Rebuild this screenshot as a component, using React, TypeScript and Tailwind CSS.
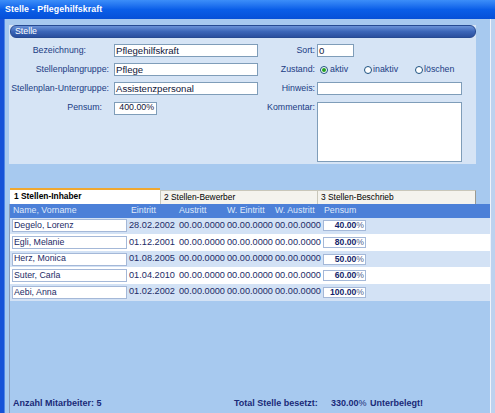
import React from "react";

const rows = [
  { name: "Degelo, Lorenz", eintritt: "28.02.2002", pensum: "40.00" },
  { name: "Egli, Melanie", eintritt: "01.12.2001", pensum: "80.00" },
  { name: "Herz, Monica", eintritt: "01.08.2005", pensum: "50.00" },
  { name: "Suter, Carla", eintritt: "01.04.2010", pensum: "60.00" },
  { name: "Aebi, Anna", eintritt: "01.02.2002", pensum: "100.00" },
];

function Radio({ checked }: { checked?: boolean }) {
  return (
    <span className="w-[8px] h-[8px] rounded-full border border-[#1c5180] bg-white flex items-center justify-center shrink-0">
      {checked && <span className="w-[4px] h-[4px] rounded-full bg-[#21a121]" />}
    </span>
  );
}

function Field({ value, width, right }: { value?: string; width: string; right?: boolean }) {
  return (
    <div
      className={`${width} h-[13px] bg-white border border-[#7f9db9] px-[1px] flex items-center text-[9.6px] text-[#10163a] leading-none ${
        right ? "justify-end" : ""
      }`}
    >
      {value}
    </div>
  );
}

export default function App() {
  return (
    <div className="w-[495px] h-[413px] flex flex-col overflow-hidden font-['Liberation_Sans',Arial,sans-serif]">
      {/* Title bar */}
      <div className="h-[19px] shrink-0 bg-linear-to-b from-[#3c8ef9] via-[#0a5ee8] to-[#0650d8] flex items-center pl-[5px]">
        <span className="text-white font-bold text-[8.8px] tracking-[0.1px]">Stelle - Pflegehilfskraft</span>
      </div>

      <div className="flex flex-1 min-h-0">
        <div className="w-[5px] bg-[#1652d8] border-r border-[#4f86e6]" />

        {/* Main area */}
        <div className="flex-1 bg-[#a7c9ef] flex flex-col min-h-0">
          {/* Stelle panel */}
          <div className="ml-[4px] mt-[6px] w-[467px] bg-[#d6e4f5] flex flex-col">
            <div className="h-[13px] ml-[1px] rounded-[6px] bg-linear-to-b from-[#6b93d8] via-[#3c66b8] to-[#2a4f9e] border border-[#264a92] flex items-center pl-[4px]">
              <span className="text-white text-[8.8px]">Stelle</span>
            </div>

            <div className="flex flex-col gap-[6px] pt-[6px] pb-[2px] text-[8.8px] text-[#203c84]">
              {/* Row 1 */}
              <div className="flex items-center">
                <span className="w-[100px] text-right pr-[23px]">Bezeichnung:</span>
                <div className="ml-[5px]">
                  <Field value="Pflegehilfskraft" width="w-[144px]" />
                </div>
                <span className="w-[57px] text-right">Sort:</span>
                <div className="ml-[2px]">
                  <Field value="0" width="w-[37px]" />
                </div>
              </div>

              {/* Row 2 */}
              <div className="flex items-center">
                <span className="w-[100px] text-right">Stellenplangruppe:</span>
                <div className="ml-[5px]">
                  <Field value="Pflege" width="w-[144px]" />
                </div>
                <span className="w-[57px] text-right">Zustand:</span>
                <div className="ml-[5px] h-[13px] flex items-center">
                  <Radio checked />
                  <span className="ml-[2px]">aktiv</span>
                  <span className="ml-[16px]"><Radio /></span>
                  <span className="ml-[1px]">inaktiv</span>
                  <span className="ml-[17px]"><Radio /></span>
                  <span className="ml-[1px]">löschen</span>
                </div>
              </div>

              {/* Row 3 */}
              <div className="flex items-center">
                <span className="w-[100px] text-right">Stellenplan-Untergruppe:</span>
                <div className="ml-[5px]">
                  <Field value="Assistenzpersonal" width="w-[144px]" />
                </div>
                <span className="w-[57px] text-right">Hinweis:</span>
                <div className="ml-[2px]">
                  <Field width="w-[145px]" />
                </div>
              </div>

              {/* Row 4 */}
              <div className="flex items-start">
                <span className="w-[100px] h-[13px] flex items-center justify-end pr-[7px]">Pensum:</span>
                <div className="ml-[5px] w-[144px]">
                  <div className="w-[43px] h-[13px] bg-white border border-[#7f9db9] pr-[2px] flex items-center justify-end text-[8.8px] text-[#10163a]">
                    400.00%
                  </div>
                </div>
                <span className="w-[57px] h-[13px] flex items-center justify-end">Kommentar:</span>
                <div className="ml-[2px] w-[145px] h-[60px] bg-white border border-[#7f9db9]" />
              </div>
            </div>
          </div>

          {/* Tabs */}
          <div className="ml-[5px] mt-[24px] flex items-end h-[16px] text-[8.4px] text-black">
            <div className="w-[150px] h-[16px] bg-white border-t-2 border-[#f0a830] flex items-center pl-[4px] font-bold">
              1 Stellen-Inhaber
            </div>
            <div className="w-[157px] h-[14px] bg-[#f4f3ee] border-t border-l border-[#c9c7ba] flex items-center pl-[3px]">
              2 Stellen-Bewerber
            </div>
            <div className="w-[159px] h-[14px] bg-[#f4f3ee] border-t border-x border-[#c9c7ba] border-r-[#9a9a92] flex items-center pl-[3px]">
              3 Stellen-Beschrieb
            </div>
          </div>

          {/* Tab content */}
          <div className="ml-[4px] flex-1 border-l border-[#8a9bb8] flex flex-col min-h-0">
            <div className="h-[14px] bg-[#4c80d8] grid grid-cols-[119px_50px_48px_48px_48px_1fr] items-center text-[8.8px] text-[#dfe8fa]">
              <span className="pl-[3px]">Name, Vorname</span>
              <span className="pl-[2px]">Eintritt</span>
              <span>Austritt</span>
              <span>W. Eintritt</span>
              <span>W. Austritt</span>
              <span className="pl-[1px]">Pensum</span>
            </div>

            {rows.map((r, i) => (
              <div
                key={r.name}
                className={`h-[16.6px] grid grid-cols-[119px_50px_48px_48px_48px_1fr] items-center text-[#1c2b66] ${
                  i % 2 === 0 ? "bg-[#d3e2f5]" : "bg-white"
                }`}
              >
                <div className="pl-[2px]">
                  <div className="w-[115px] h-[13px] bg-white border border-[#a4b8d8] pl-[1px] flex items-center text-[8.8px]">
                    {r.name}
                  </div>
                </div>
                <span className="text-[9.2px]">{r.eintritt}</span>
                <span className="text-[9.2px]">00.00.0000</span>
                <span className="text-[9.2px]">00.00.0000</span>
                <span className="text-[9.2px]">00.00.0000</span>
                <div>
                  <div className="w-[43px] h-[11px] bg-white border border-[#a4b8d8] pr-[1px] flex items-center justify-end text-[8.6px] text-[#141f6b]">
                    <span className="font-bold">{r.pensum}</span>
                    <span className="text-[#4a5a8a]">%</span>
                  </div>
                </div>
              </div>
            ))}

            <div className="flex-1" />

            {/* Footer */}
            <div className="h-[12px] mb-[3px] flex items-center text-[9px] font-bold text-[#1a2a78]">
              <span className="w-[224px] pl-[3px]">Anzahl Mitarbeiter: 5</span>
              <span className="w-[97px]">Total Stelle besetzt:</span>
              <span className="w-[39px]">
                330.00<span className="font-normal">%</span>
              </span>
              <span>Unterbelegt!</span>
            </div>
          </div>
        </div>

        <div className="w-px bg-[#eef3fb]" />
        <div className="w-[4px] bg-[#bcd2ef]" />
      </div>
    </div>
  );
}
